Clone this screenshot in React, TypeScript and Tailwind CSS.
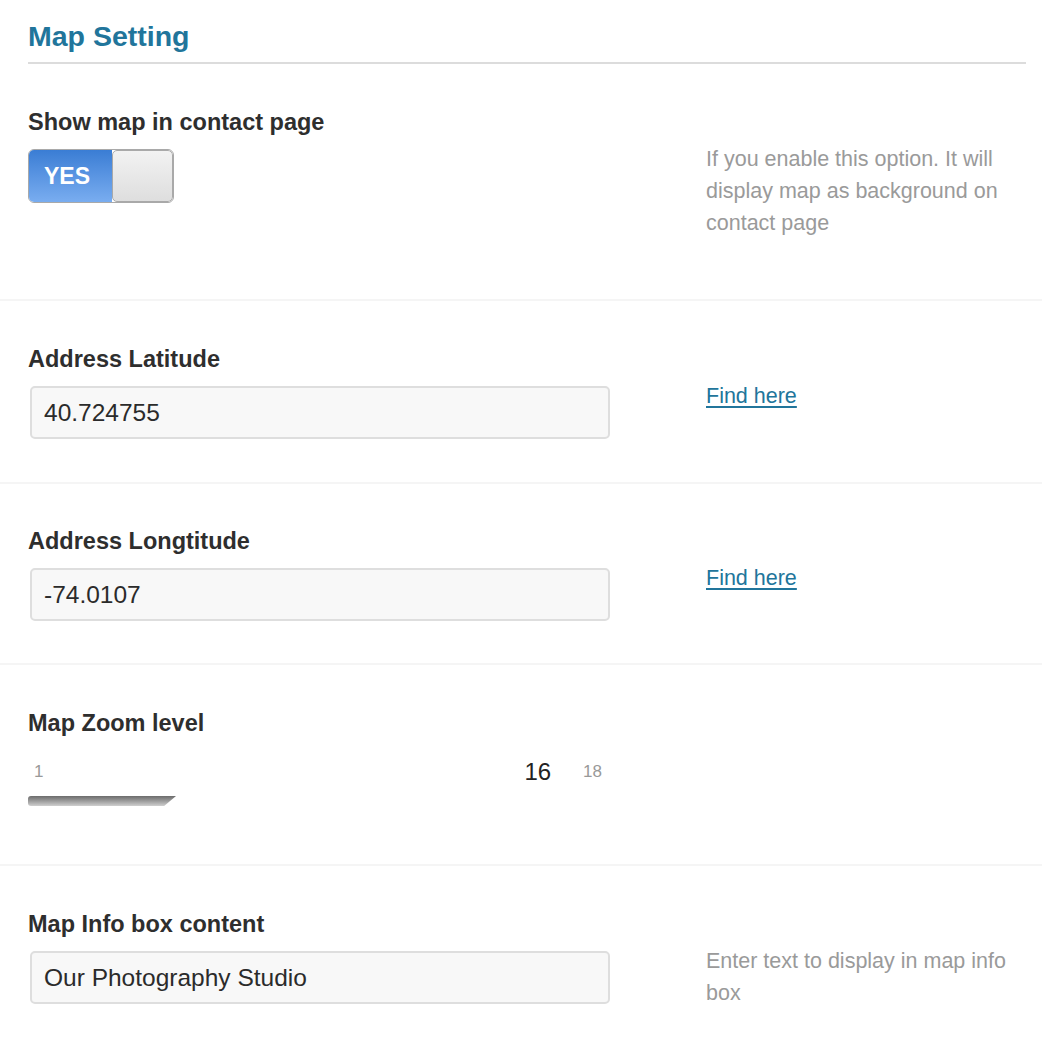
import React, { useState } from "react";

const font = { fontFamily: '"Liberation Sans", Arial, sans-serif' };

function Toggle({ on, onClick }: { on: boolean; onClick: () => void }) {
  return (
    <button
      type="button"
      onClick={onClick}
      className="flex h-[54px] w-[146px] overflow-hidden rounded-[6px] border border-[#a9a9a9] p-0"
    >
      <span className="flex h-full w-[83px] items-center bg-gradient-to-b from-[#3a7dd4] to-[#79adf0] pl-[15px] text-[23px] font-bold text-white">
        {on ? "YES" : ""}
      </span>
      <span className="h-full flex-1 rounded-[5px] border border-[#a9a9a9] bg-gradient-to-b from-[#f2f2f2] to-[#dedede]" />
    </button>
  );
}

function TextField({ value }: { value: string }) {
  return (
    <input
      type="text"
      defaultValue={value}
      className="ml-[2px] h-[53px] w-[580px] rounded-[5px] border-2 border-[#dedede] bg-[#f8f8f8] pl-[12px] text-[24.5px] text-[#2b2b2b] outline-none"
      style={font}
    />
  );
}

function Row({
  label,
  control,
  side,
  first,
  short,
}: {
  label: string;
  control: React.ReactNode;
  side?: React.ReactNode;
  first?: boolean;
  short?: boolean;
}) {
  let cls = "flex border-t-2 border-[#f5f5f5] pl-[28px] pt-[44px] pb-[43px]";
  if (first) cls = "flex pl-[28px] pt-[44px] pb-[60px]";
  if (short) cls = "flex border-t-2 border-[#f5f5f5] pl-[28px] pt-[43px] pb-[42px]";

  return (
    <div className={cls}>
      <div className="w-[678px]">
        <div className="text-[23.5px] font-bold leading-[28px] text-[#2e2e2e]">{label}</div>
        <div className="mt-[13px]">{control}</div>
      </div>
      <div className="w-[330px] pt-[35px] text-[21.5px] leading-[32px] text-[#9a9a9a]">{side}</div>
    </div>
  );
}

function FindHere() {
  return (
    <a href="#" className="text-[#21759b] underline decoration-2 underline-offset-[3px]">
      Find here
    </a>
  );
}

export default function App() {
  const [showMap, setShowMap] = useState(true);

  return (
    <div className="min-h-screen w-[1042px] bg-white" style={font}>
      <div className="pl-[28px] pr-[16px]">
        <h2 className="border-b-2 border-[#dcdcdc] pt-[19px] pb-[9px] text-[28.5px] font-bold leading-[34px] text-[#21759b]">
          Map Setting
        </h2>
      </div>

      <Row
        first
        label="Show map in contact page"
        control={<Toggle on={showMap} onClick={() => setShowMap(!showMap)} />}
        side={<p>If you enable this option. It will display map as background on contact page</p>}
      />

      <Row label="Address Latitude" control={<TextField value="40.724755" />} side={<FindHere />} />

      <Row short label="Address Longtitude" control={<TextField value="-74.0107" />} side={<FindHere />} />

      <div className="border-t-2 border-[#f5f5f5] pl-[28px] pt-[44px] pb-[58px]">
        <div className="text-[23.5px] font-bold leading-[28px] text-[#2e2e2e]">Map Zoom level</div>
        <div className="mt-[21px] flex h-[28px] w-[580px] items-center">
          <span className="pl-[6px] text-[17px] text-[#999]">1</span>
          <span className="ml-auto text-[24px] text-[#222]">16</span>
          <span className="ml-[32px] mr-[6px] text-[17px] text-[#999]">18</span>
        </div>
        <div className="mt-[10px] h-[10px] w-[148px] rounded-l-[3px] bg-gradient-to-b from-[#6c6c6c] to-[#cfcfcf] [clip-path:polygon(0_0,100%_0,92%_100%,0_100%)]" />
      </div>

      <Row
        label="Map Info box content"
        control={<TextField value="Our Photography Studio" />}
        side={<p>Enter text to display in map info box</p>}
      />
    </div>
  );
}
